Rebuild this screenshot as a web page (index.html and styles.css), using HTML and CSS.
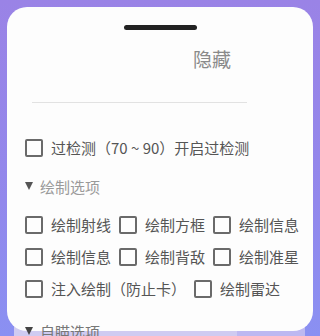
FILE: index.html
```html
<!DOCTYPE html>
<html lang="zh">
<head>
<meta charset="utf-8">
<link rel="stylesheet" href="styles.css">
</head>
<body>
<div class="card">
  <div class="handle"></div>
  <div class="hide-row"><span class="hide">隐藏</span></div>
  <div class="divider"></div>
  <label class="check-row first">
    <span class="box"></span><span class="label">过检测（70 ~ 90）开启过检测</span>
  </label>
  <div class="section-head"><span class="tri"></span><span>绘制选项</span></div>
  <div class="options">
    <label class="check-row"><span class="box"></span><span class="label">绘制射线</span></label>
    <label class="check-row"><span class="box"></span><span class="label">绘制方框</span></label>
    <label class="check-row"><span class="box"></span><span class="label">绘制信息</span></label>
    <label class="check-row"><span class="box"></span><span class="label">绘制信息</span></label>
    <label class="check-row"><span class="box"></span><span class="label">绘制背敌</span></label>
    <label class="check-row"><span class="box"></span><span class="label">绘制准星</span></label>
    <label class="check-row"><span class="box"></span><span class="label">注入绘制（防止卡）</span></label>
    <label class="check-row"><span class="box"></span><span class="label">绘制雷达</span></label>
  </div>
  <div class="section-head last"><span class="tri"></span><span>自瞄选项</span></div>
</div>
<div class="under"><div class="band-a"></div><div class="band-b"></div></div>
</body>
</html>
```

FILE: styles.css
```css
html, body {
  margin: 0;
  padding: 0;
}
body {
  width: 320px;
  height: 336px;
  overflow: hidden;
  background: linear-gradient(180deg, #9a83e6 0%, #9288ec 60%, #8a90f2 100%);
  font-family: "Noto Sans CJK SC", "Noto Sans", sans-serif;
  padding-top: 7px;
  box-sizing: border-box;
  position: relative;
}
.card {
  margin: 0 7px;
  height: 324px;
  background: #fdfdfd;
  border-radius: 20px;
  padding-top: 18px;
  box-sizing: border-box;
  position: relative;
  z-index: 2;
}
.handle {
  width: 73px;
  height: 5px;
  border-radius: 3px;
  background: #222;
  margin: 0 auto;
}
.hide-row {
  margin-top: 15px;
  padding-left: 186px;
  height: 28px;
  line-height: 28px;
}
.hide {
  font-size: 19px;
  color: #8a8a8a;
}
.divider {
  margin: 29px 0 0 25px;
  width: 215px;
  height: 1px;
  background: #e2e2e2;
}
.check-row {
  display: flex;
  align-items: center;
  gap: 8px;
  height: 24px;
  font-size: 15px;
  color: #555;
}
.check-row.first {
  margin: 33px 0 0 18px;
}
.box {
  width: 18px;
  height: 18px;
  box-sizing: border-box;
  border: 2px solid #6a6a6a;
  border-radius: 2px;
  flex: none;
}
.label {
  white-space: nowrap;
  line-height: 24px;
}
.section-head {
  margin: 14px 0 0 18px;
  display: flex;
  align-items: center;
  gap: 7px;
  height: 24px;
  font-size: 15px;
  color: #9a9a9a;
}
.section-head.last {
  margin-top: 18px;
  color: #777;
}
.tri {
  width: 0;
  height: 0;
  border-left: 4.5px solid transparent;
  border-right: 4.5px solid transparent;
  border-top: 8px solid #555;
}
.section-head.last .tri {
  border-top-color: #444;
}
.options {
  margin: 15px 0 0 18px;
  width: 290px;
  display: flex;
  flex-wrap: wrap;
  column-gap: 8px;
  row-gap: 8px;
}
.under {
  position: absolute;
  left: 14px;
  top: 326px;
  width: 291px;
  height: 10px;
  display: flex;
  z-index: 1;
}
.band-a {
  width: 223px;
  background: #cfcbf1;
}
.band-b {
  flex: 1;
  background: #bdb8f1;
}
```
